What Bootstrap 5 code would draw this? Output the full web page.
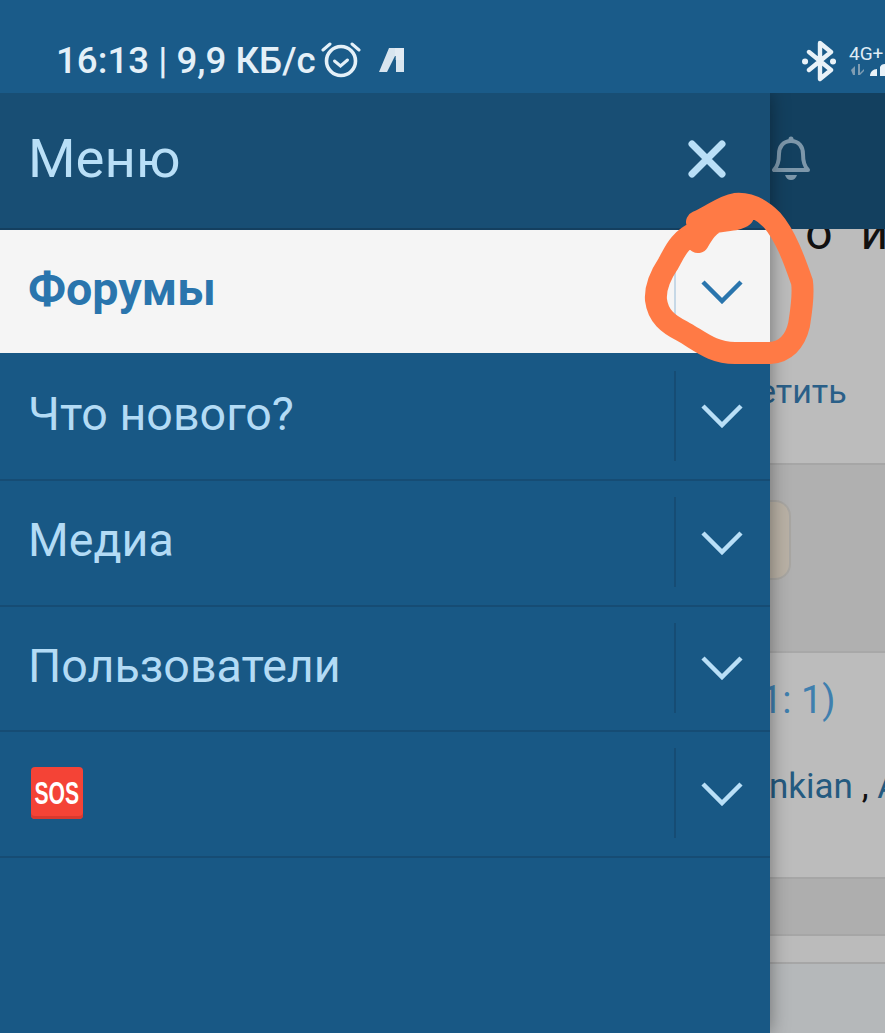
<!DOCTYPE html>
<html lang="ru">
<head>
<meta charset="utf-8">
<title>Меню</title>
<link href="https://cdn.jsdelivr.net/npm/bootstrap@5.3.0/dist/css/bootstrap.min.css" rel="stylesheet">
<style>
html,body{height:1033px;overflow:hidden;margin:0;background:#185885;font-family:Roboto,"Liberation Sans",sans-serif}
.shot{width:885px;height:1033px;overflow:hidden;position:relative}
.statusbar{height:93px;background:#1a5b89;color:#e4f0f8;padding:30px 0 0 56px}
.clock{font-size:36.700px;font-weight:500;line-height:1;white-space:nowrap;width:265px;flex:none}
.alarm{width:40px;height:40px;flex:none;margin-top:-5px}
.nicon{width:26px;height:26px;flex:none;margin-left:18px;margin-top:-4px}
.bt{width:34px;height:42px;flex:none;margin-top:-2px}
.netbox{width:36px;flex:none;margin-left:13px;margin-top:-2px}
.net4g{font-size:19px;line-height:17px;color:#dfecf5;white-space:nowrap;display:block}
.netbox svg{display:block;margin-top:1px}
.stage{height:940px;overflow:hidden}
.drawer{width:770px;flex:none;background:#185885;position:relative;z-index:2;box-shadow:0 0 18px rgba(0,0,0,.4)}
.drawerhead{height:137px;background:#184e74;border-bottom:2px solid #143f5f;padding:0 44px 0 28px;color:#b9dff7}
.drawertitle{font-size:54.500px;font-weight:400;line-height:1;margin-bottom:4px}
.menu-row{height:125.5px;background:#185885;border-bottom:2px solid #164c74;color:#b3dbf5;font-size:46.600px;padding-left:28px;border-radius:0}
.menu-row.first{height:128px}
.menu-row.active-row{height:123px;background:#f5f5f5;color:#2a75ad;font-weight:700;font-size:46.600px;border-bottom:0}
.rowlabel{flex:1 1 auto;line-height:1;margin-top:-4px}
.rowtoggle{width:96px;height:90px;flex:none;border-left:2px solid #164c74;margin-top:-1px}
.active-row .rowtoggle{border-left-color:#c6d8e6}
.chev{width:42px;height:25px;margin-left:25px;display:block}
.sosbox{display:inline-flex;align-items:center;justify-content:center;width:52px;height:52px;background:#f44336;border-radius:4px;box-shadow:inset 0 -3px 0 #d8392f;color:#fff;font-family:"Liberation Sans Narrow","Liberation Sans",sans-serif;font-weight:700;font-size:32px;line-height:1;margin-left:3px;margin-top:-8px}
.soslabel{display:inline-block;transform:scaleX(.66)}
.behind{flex:1 1 auto;min-width:0;overflow:hidden}
.behind-top{height:136px;background:#13405f;padding-left:2px}
.behind-top svg{width:38px;height:46px;margin-bottom:6px}
.band{white-space:nowrap;overflow:hidden;border-bottom:2px solid #a6a6a6}
.band-a{height:236px;background:#bcbcbc}
.band-b{height:188px;background:#b0b0b0;border-bottom-color:#a8a8a8}
.band-c{height:226px;background:#bcbcbc}
.band-d{height:57px;background:#aeaeae}
.band-e{height:28px;background:#bbb}
.band-f{height:70px;background:#b5b8ba;border-bottom:0}
.frag-black{font-size:48px;letter-spacing:8px;color:#111;line-height:1;margin-top:-20px;margin-left:-26px}
.frag-link{font-size:34px;color:#2a5f88;line-height:1;margin-top:117px;margin-left:-12px}
.beige{width:21px;height:80px;background:#b9b1a5;border:2px solid #a8a6a2;border-left:0;border-radius:0 16px 16px 0;margin-top:35px}
.frag-count{font-size:38px;color:#3f7fae;line-height:1;margin-top:28px;margin-left:-9px}
.frag-users{font-size:35px;color:#245a80;line-height:1;margin-top:50px;margin-left:-1px}
.frag-users i{font-style:normal;color:#111}
.scribble{position:absolute;left:0;top:0;z-index:5;pointer-events:none}
</style>
</head>
<body>
<div class="shot">
  <div class="statusbar d-flex align-items-center">
    <span class="clock">16:13 | 9,9 КБ/с</span>
    <svg class="alarm" viewBox="0 0 40 40" fill="none" stroke="#e4f0f8" stroke-linecap="round"><circle cx="20" cy="22" r="14.5" stroke-width="3.6"/><path d="M13.5 22l6 5 7-6" stroke-width="3"/><path d="M2 11l7-6M31 5l7 6" stroke-width="3"/></svg>
    <svg class="nicon" viewBox="0 0 26 26"><path d="M0 25L10 1h15v24h-8V9h-1L8 25z" fill="#e8f1f7" opacity=".92"/><path d="M16 1h9v12h-9z" fill="#fff" opacity=".25"/></svg>
    <div class="flex-grow-1"></div>
    <svg class="bt" viewBox="0 0 34 42" fill="none" stroke="#e9f2f8" stroke-width="4.4" stroke-linejoin="round" stroke-linecap="round"><path d="M7 12l22 18-11 9V3l11 9L7 30"/><path d="M3 21.500h.1M31 21.500h.1" stroke-width="6"/></svg>
    <div class="netbox">
      <span class="net4g">4G+</span>
      <svg width="36" height="14" viewBox="0 0 36 14"><path d="M2 7l4-4v9H4zM9 1h2l0 9 4-4v2l-4 4H9z" fill="#7f9db3"/><path d="M21 13c0-4 3-7 7-7v7z" fill="#e9f2f8"/><path d="M31 13V4c1-2 2-3 5-3v12z" fill="#e9f2f8"/></svg>
    </div>
  </div>
  <div class="stage d-flex">
    <nav class="drawer">
      <div class="drawerhead d-flex align-items-center justify-content-between">
        <span class="drawertitle">Меню</span>
        <svg width="38" height="38" viewBox="0 0 38 38" class="mb-1" aria-label="Закрыть"><path d="M4 4l30 30M34 4L4 34" stroke="#b9dff7" stroke-width="7" stroke-linecap="round"/></svg>
      </div>
      <div class="list-group list-group-flush">
        <div class="menu-row active-row d-flex align-items-center">
          <span class="rowlabel">Форумы</span>
          <span class="rowtoggle d-flex align-items-center"><svg class="chev" viewBox="0 0 42 25" fill="none" stroke="#2a75ad" stroke-width="4.500"><path d="M2 3l19 19L40 3"/></svg></span>
        </div>
        <div class="menu-row first d-flex align-items-center">
          <span class="rowlabel">Что нового?</span>
          <span class="rowtoggle d-flex align-items-center"><svg class="chev" viewBox="0 0 42 25" fill="none" stroke="#b9dff7" stroke-width="4.500"><path d="M2 3l19 19L40 3"/></svg></span>
        </div>
        <div class="menu-row d-flex align-items-center">
          <span class="rowlabel">Медиа</span>
          <span class="rowtoggle d-flex align-items-center"><svg class="chev" viewBox="0 0 42 25" fill="none" stroke="#b9dff7" stroke-width="4.500"><path d="M2 3l19 19L40 3"/></svg></span>
        </div>
        <div class="menu-row d-flex align-items-center">
          <span class="rowlabel">Пользователи</span>
          <span class="rowtoggle d-flex align-items-center"><svg class="chev" viewBox="0 0 42 25" fill="none" stroke="#b9dff7" stroke-width="4.500"><path d="M2 3l19 19L40 3"/></svg></span>
        </div>
        <div class="menu-row d-flex align-items-center">
          <span class="rowlabel"><span class="sosbox"><span class="soslabel">SOS</span></span></span>
          <span class="rowtoggle d-flex align-items-center"><svg class="chev" viewBox="0 0 42 25" fill="none" stroke="#b9dff7" stroke-width="4.500"><path d="M2 3l19 19L40 3"/></svg></span>
        </div>
      </div>
    </nav>
    <div class="behind">
      <div class="behind-top d-flex align-items-center">
        <svg viewBox="0 0 38 46" fill="none" stroke="#7d97aa" stroke-width="4" stroke-linejoin="round"><path d="M19 6c-8 0-12 6-12 13 0 7-1 12-5 16h34c-4-4-5-9-5-16 0-7-4-13-12-13z"/><circle cx="19" cy="4" r="2.500" fill="#7d97aa" stroke="none"/><path d="M13 40h12c-1 3-3 5-6 5s-5-2-6-5z" fill="#7d97aa" stroke="none"/></svg>
      </div>
      <div class="band band-a"><div class="frag-black">его и</div><div class="frag-link">етить</div></div>
      <div class="band band-b"><div class="beige"></div></div>
      <div class="band band-c"><div class="frag-count">1: 1)</div><div class="frag-users">nkian <i>,</i> A</div></div>
      <div class="band band-d"></div>
      <div class="band band-e"></div>
      <div class="band band-f"></div>
    </div>
  </div>
  <svg class="scribble" width="885" height="1033" fill="none" stroke="#ff7a45" stroke-width="22" stroke-linecap="round" stroke-linejoin="round"><path d="M698 242C704 232 708 226 716 222 728 220 738 220 743 216M697 232C678 240 674 254 668 264 660 276 655 288 656 300 658 316 668 324 682 331 700 341 712 353 735 353L770 353C785 352 795 342 799 325 801 312 804 296 802 282 795 262 786 236 772 220 758 206 745 203 735 204 722 206 712 216 697 222"/></svg>
</div>
</body>
</html>
